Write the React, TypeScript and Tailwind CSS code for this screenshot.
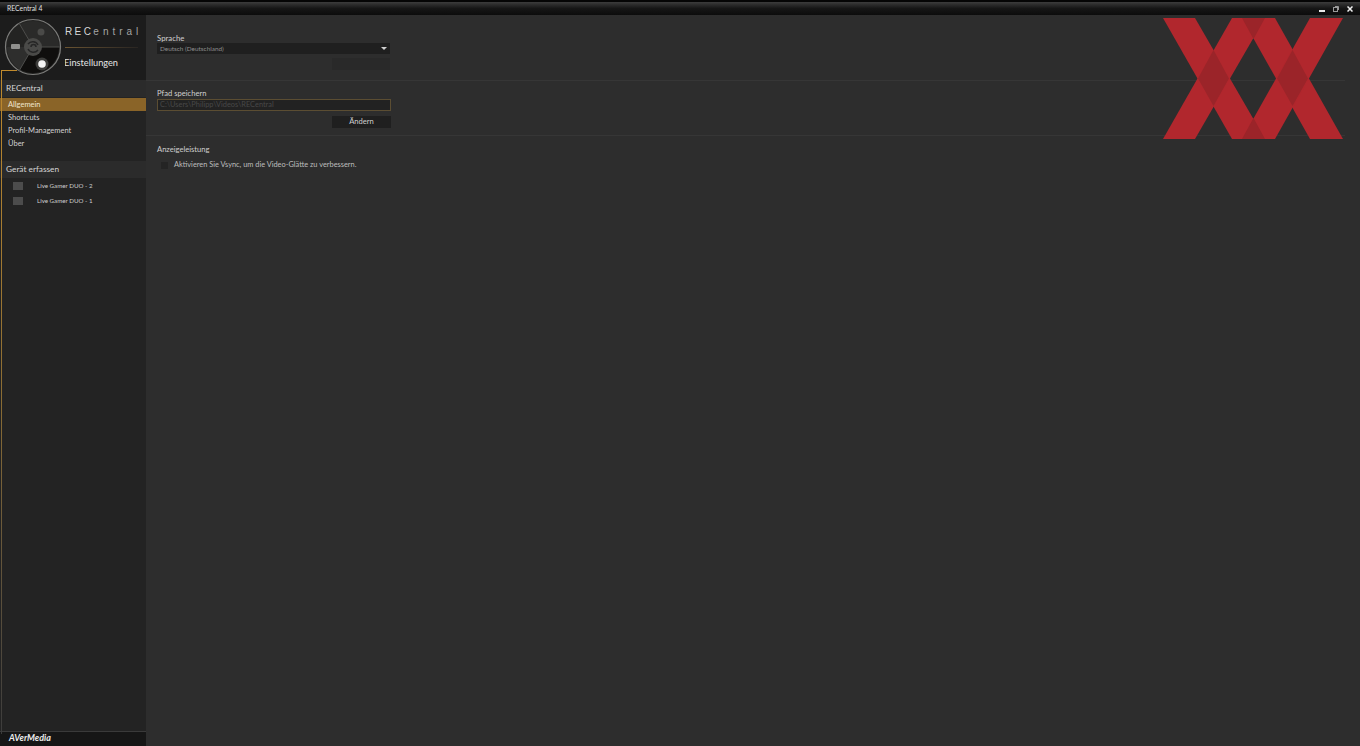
const Disc = () => (
  <svg width="58" height="58" viewBox="0 0 58 58" className="shrink-0">
    <circle cx="29" cy="29" r="27.5" fill="#232322" stroke="#7c7c7a" strokeWidth="1.2" />
    <path d="M29 29 L55 29 A26 26 0 0 1 16 51.5 Z" fill="#0f0e0d" />
    <path d="M29 29 L16 6.5 A26 26 0 0 1 55 29 Z" fill="#2a2a29" />
    <path d="M29 29 L3 29 A26 26 0 0 0 16 51.5 Z" fill="#2e2e2d" />
    <path d="M29 29 L56 29 M29 29 L15 53 M29 29 L15 5" stroke="#4d4d4b" strokeWidth="1" />
    <circle cx="29" cy="29" r="9" fill="#4a4a48" />
    <path d="M24 26 A6 6 0 0 1 34 27 M34 32 A6 6 0 0 1 24 31 M27 29 A2.5 2.5 0 0 1 32 29" fill="none" stroke="#262626" strokeWidth="1.5" />
    <circle cx="37" cy="14" r="3.5" fill="#4a4a48" />
    <rect x="7" y="26" width="9" height="5" rx="1" fill="#8f8f8d" />
    <circle cx="38" cy="46" r="6.5" fill="#3e3e3c" />
    <circle cx="38" cy="46" r="3.8" fill="#f4f4f4" />
  </svg>
);

const Bands = () => (
  <svg width="181" height="122" viewBox="1163 18 181 122" className="absolute top-[3px] right-[16px]">
    <g fill="#b1272d">
      <polygon points="1163,18 1195,18 1265,139 1232,139" />
      <polygon points="1232,18 1265,18 1195,139 1163,139" />
      <polygon points="1242,18 1275,18 1343,139 1310,139" />
      <polygon points="1310,18 1343,18 1275,139 1242,139" />
    </g>
    <g fill="#9b2429">
      <polygon points="1213.5,50 1229,78.5 1213.5,106 1198,78.5" />
      <polygon points="1292.5,50 1308,78.5 1292.5,106 1277,78.5" />
      <polygon points="1242,18 1265,18 1253.5,39" />
      <polygon points="1242,139 1265,139 1253.5,118" />
    </g>
  </svg>
);

const WindowButtons = () => (
  <div className="flex items-center gap-[8px] pr-[7px]">
    <svg width="6" height="6" viewBox="0 0 6 6"><rect x="0" y="4" width="6" height="2" fill="#e8e8e8" /></svg>
    <svg width="6" height="6" viewBox="0 0 6 6" fill="none" stroke="#9a9a9a"><rect x="0.5" y="1.5" width="4" height="4" /><path d="M2 0.5 H5.5 V4" /></svg>
    <svg width="6" height="6" viewBox="0 0 6 6" stroke="#f0f0f0" strokeWidth="1.5"><path d="M0.5 0.5 L5.5 5.5 M5.5 0.5 L0.5 5.5" /></svg>
  </div>
);

const App = () => {
  return (
    <div className="w-[1360px] h-[746px] flex flex-col overflow-hidden bg-[#2d2d2d] text-[#c9c9c9] font-['Lato','Open_Sans',sans-serif]">
      <div className="h-[15px] shrink-0 flex items-center justify-between bg-gradient-to-b from-[#3c3c3c] via-[#161616] to-[#0c0c0c] border-t-2 border-[#050505]">
        <span className="pl-[7px] text-[6.8px] leading-none text-[#e0e0e0]">RECentral 4</span>
        <WindowButtons />
      </div>

      <div className="flex-1 flex min-h-0">
        <aside className="relative w-[146px] shrink-0 flex flex-col bg-[#232323]">
          <div className="absolute left-[1px] top-[55px] bottom-[12px] w-[1px] bg-gradient-to-b from-[#c08a2c] via-[#8a6c34] to-[#3c3c3c]" />
          <div className="absolute left-[1px] top-[55px] w-[16px] h-[1px] bg-[#c08a2c]" />

          <div className="h-[65px] shrink-0 flex gap-[3px] pl-[4px] pt-[3px] bg-[#1c1c1c]">
            <Disc />
            <div className="flex-1 min-w-0 overflow-hidden">
              <div className="mt-[8px] text-[10px] leading-[11px] whitespace-nowrap font-['Liberation_Sans',sans-serif] text-[#d6d6d6]">
                <span className="tracking-[2.4px]">REC</span>
                <span className="tracking-[4px] font-light text-[#a4a4a4]">entral</span>
              </div>
              <div className="h-[1px] mt-[10px] mr-[8px] bg-gradient-to-r from-[#6b5431] to-[#2a2622]" />
              <div className="mt-[8px] -ml-[1px] text-[9.2px] leading-[14px] text-[#e4e4e4]">Einstellungen</div>
            </div>
          </div>

          <div className="h-[17px] shrink-0 flex items-center pl-[6px] text-[8.4px] bg-[#2b2b2b] text-[#d6d6d6]">RECentral</div>
          <div className="h-[13px] mt-[1px] shrink-0 flex items-center pl-[8px] text-[7.5px] bg-[#8a6428] text-[#f0e6d2]">Allgemein</div>
          <nav className="flex flex-col text-[7.5px] text-[#d2d2d2] pb-[12px]">
            <div className="h-[13px] flex items-center pl-[8px] pt-[1px]">Shortcuts</div>
            <div className="h-[13px] flex items-center pl-[8px] pt-[1px]">Profil-Management</div>
            <div className="h-[12px] flex items-center pl-[8px] pt-[1px]">Über</div>
          </nav>

          <div className="h-[17px] shrink-0 flex items-center pl-[6px] text-[8.3px] bg-[#2b2b2b] text-[#d6d6d6]">Gerät erfassen</div>
          <div className="flex flex-col text-[6.2px] text-[#cfcfcf]">
            <div className="h-[15px] flex items-center gap-[14px] pl-[13px]">
              <div className="w-[10px] h-[8px] bg-[#4c4c4c]" />
              <span>Live Gamer DUO - 2</span>
            </div>
            <div className="h-[16px] flex items-center gap-[14px] pl-[13px]">
              <div className="w-[10px] h-[8px] bg-[#4c4c4c]" />
              <span>Live Gamer DUO - 1</span>
            </div>
          </div>

          <div className="mt-auto h-[15px] shrink-0 flex items-center pl-[9px] pb-[2px] bg-[#161616] border-t border-[#3a3a3a]">
            <span className="text-[9px] font-bold italic text-[#ececec]">AVerMedia</span>
          </div>
        </aside>

        <main className="relative flex-1 min-w-0 pt-[18px]">
          <Bands />
          <section className="pl-[11px] h-[47px]">
            <div className="text-[7.8px] leading-[10px] text-[#cfcfcf]">Sprache</div>
            <div className="w-[233px] h-[11px] flex items-center justify-between pl-[3px] pr-[3px] bg-[#1f1f1f] text-[6.4px] text-[#8e8e8e]">
              <span>Deutsch (Deutschland)</span>
              <span className="w-0 h-0 border-x-[3px] border-x-transparent border-t-[3px] border-t-[#d0d0d0]" />
            </div>
            <div className="ml-[175px] mt-[4px] w-[58px] h-[12px] bg-[#292929]" />
          </section>
          <div className="h-[1px] mr-[15px] bg-[#363636]" />

          <section className="pl-[11px] pt-[7px] h-[54px]">
            <div className="text-[7.6px] leading-[10px] text-[#cfcfcf]">Pfad speichern</div>
            <div className="w-[234px] h-[12px] mt-[1px] flex items-center pl-[2px] bg-[#222222] border border-[#5b4d32] text-[7.4px] text-[#484848]">C:\Users\Philipp\Videos\RECentral</div>
            <div className="ml-[175px] mt-[5px] w-[59px] h-[12px] flex items-center justify-center bg-[#1f1f1f] text-[7.6px] text-[#cfcfcf]">Ändern</div>
          </section>
          <div className="h-[1px] mr-[15px] bg-[#363636]" />

          <section className="pl-[11px] pt-[8px]">
            <div className="text-[7.6px] leading-[10px] text-[#cfcfcf]">Anzeigeleistung</div>
            <div className="flex items-center gap-[6px] mt-[6px] pl-[4px]">
              <div className="w-[7px] h-[7px] bg-[#242424]" />
              <span className="text-[7.4px] leading-[10px] text-[#bdbdbd]">Aktivieren Sie Vsync, um die Video-Glätte zu verbessern.</span>
            </div>
          </section>
        </main>
      </div>
    </div>
  );
};

export default App;
